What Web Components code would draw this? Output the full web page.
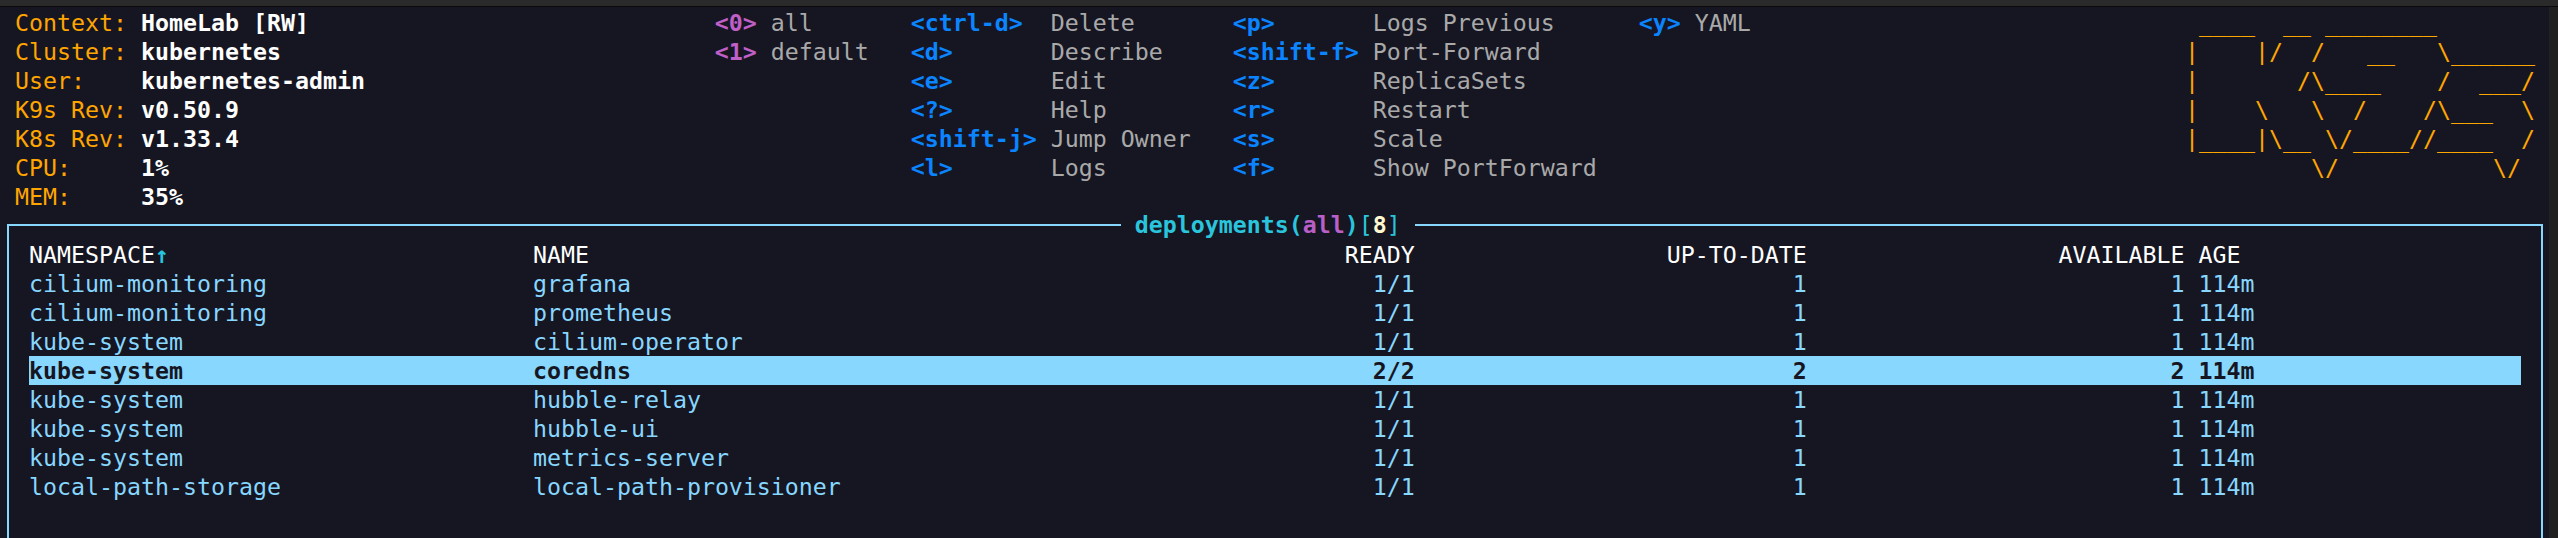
<!DOCTYPE html>
<html>
<head>
<meta charset="utf-8">
<title>k9s</title>
<style>
  html, body { margin: 0; padding: 0; background: #161622; overflow: hidden; }
  body { width: 2558px; height: 538px; font-family: "DejaVu Sans Mono", monospace; }
</style>
</head>
<body>
<k9s-screen>
  <k9s-header slot="header"></k9s-header>
  <k9s-table slot="table"></k9s-table>
</k9s-screen>

<script>
// everything in the terminal sits on a 14x29 character grid, so widths are in ch
const esc = s => s.replace(/</g, '&lt;').replace(/>/g, '&gt;');

customElements.define('k9s-screen', class extends HTMLElement {
  constructor() {
    super();
    this.attachShadow({ mode: 'open' }).innerHTML = `
      <style>
        :host { display: block; width: 2558px; height: 538px; background: #161622; overflow: hidden; }
        .bar { height: 6px; background: #2a2a2a; border-bottom: 1px solid #0a0a0a; }
        .body { display: flex; height: 531px; }
        .term {
          width: 2549px;
          box-sizing: border-box;
          padding: 1px 0 0 1px;
          overflow: hidden;
          font: 23.25px/29px "DejaVu Sans Mono", monospace;
        }
        .gutter { flex: 1; background: #202020; }
      </style>
      <div class="bar"></div>
      <div class="body">
        <div class="term">
          <slot name="header"></slot>
          <slot name="table"></slot>
        </div>
        <div class="gutter"></div>
      </div>`;
  }
});

customElements.define('k9s-header', class extends HTMLElement {
  constructor() {
    super();
    const info = [['Context:', 'HomeLab [RW]'], ['Cluster:', 'kubernetes'], ['User:', 'kubernetes-admin'],
      ['K9s Rev:', 'v0.50.9'], ['K8s Rev:', 'v1.33.4'], ['CPU:', '1%'], ['MEM:', '35%']];
    const ns = [['<0>', 'all'], ['<1>', 'default']];
    const keys1 = [['<ctrl-d>', 'Delete'], ['<d>', 'Describe'], ['<e>', 'Edit'], ['<?>', 'Help'], ['<shift-j>', 'Jump Owner'], ['<l>', 'Logs']];
    const keys2 = [['<p>', 'Logs Previous'], ['<shift-f>', 'Port-Forward'], ['<z>', 'ReplicaSets'], ['<r>', 'Restart'], ['<s>', 'Scale'], ['<f>', 'Show PortForward']];
    const keys3 = [['<y>', 'YAML']];
    const pairs = (list, a, b) => list.map(p => `<span class="${a}">${esc(p[0])}</span><span class="${b}">${esc(p[1])}</span>`).join('');
    const logo = [
      ' ____  __ ________',
      '|    |/  /   __   \\______',
      '|       /\\____    /  ___/',
      '|    \\   \\  /    /\\___  \\',
      '|____|\\__ \\/____//____  /',
      '         \\/           \\/'
    ].join('\n');
    this.attachShadow({ mode: 'open' }).innerHTML = `
      <style>
        :host { display: flex; height: 216px; padding: 0 1ch; }
        .grid { display: grid; grid-auto-rows: 29px; align-content: start; white-space: pre; }
        .info { grid-template-columns: 9ch 1fr; width: 50ch; }
        .ns { grid-template-columns: 4ch 1fr; width: 14ch; }
        .k1 { grid-template-columns: 10ch 1fr; width: 23ch; }
        .k2 { grid-template-columns: 10ch 1fr; width: 29ch; }
        .k3 { grid-template-columns: 4ch 1fr; width: 10ch; }
        .lbl { color: #ffa500; }
        .val { color: #fff; font-weight: bold; }
        .num { color: #c05fc8; font-weight: bold; }
        .key { color: #0a84ff; font-weight: bold; }
        .txt { color: #a9a9a9; }
        .logo { margin: 0 0 0 auto; width: 25ch; font: inherit; color: #ffa500; }
      </style>
      <div class="grid info">${pairs(info, 'lbl', 'val')}</div>
      <div class="grid ns">${pairs(ns, 'num', 'txt')}</div>
      <div class="grid k1">${pairs(keys1, 'key', 'txt')}</div>
      <div class="grid k2">${pairs(keys2, 'key', 'txt')}</div>
      <div class="grid k3">${pairs(keys3, 'key', 'txt')}</div>
      <pre class="logo">${esc(logo)}</pre>`;
  }
});

customElements.define('k9s-table', class extends HTMLElement {
  constructor() {
    super();
    const rows = [
      ['cilium-monitoring', 'grafana', '1/1', '1', '1', '114m'],
      ['cilium-monitoring', 'prometheus', '1/1', '1', '1', '114m'],
      ['kube-system', 'cilium-operator', '1/1', '1', '1', '114m'],
      ['kube-system', 'coredns', '2/2', '2', '2', '114m'],
      ['kube-system', 'hubble-relay', '1/1', '1', '1', '114m'],
      ['kube-system', 'hubble-ui', '1/1', '1', '1', '114m'],
      ['kube-system', 'metrics-server', '1/1', '1', '1', '114m'],
      ['local-path-storage', 'local-path-provisioner', '1/1', '1', '1', '114m']
    ];
    const row = (cells, cls) => `<div class="row ${cls}">${cells.map((c, i) => `<span class="c${i}">${c}</span>`).join('')}</div>`;
    this.attachShadow({ mode: 'open' }).innerHTML = `
      <style>
        :host {
          display: block;
          margin-left: 6px;
          width: 2536px;
          height: 320px;
          box-sizing: border-box;
          border: solid #87d7ff;
          border-width: 2px 2px 0;
          padding: 14px 20px 0;
          position: relative;
        }
        /* title sits over the top border */
        .title {
          position: absolute;
          top: -16px;
          left: calc(80ch - 8px);
          background: #161622;
          padding: 0 1ch;
          color: #2ac5dd;
          font-weight: bold;
          white-space: pre;
        }
        .title b { color: #b85fc8; }
        .title i { font-style: normal; color: #fff7d0; }
        .title s { text-decoration: none; font-weight: normal; }
        .row {
          display: grid;
          height: 29px;
          grid-template-columns: 36ch 58ch 5ch 28ch 27ch 1fr;
          color: #87d7ff;
          white-space: pre;
        }
        .c2, .c3, .c4 { text-align: right; }
        .c5 { padding-left: 1ch; }
        .head { color: #fff; }
        .sel { background: #87d7ff; color: #161622; font-weight: bold; }
        .arrow { color: #2ac5dd; font-weight: bold; }
      </style>
      <div class="title">deployments(<b>all</b>)<s>[</s><i>8</i><s>]</s></div>
      ${row(['NAMESPACE<span class="arrow">↑</span>', 'NAME', 'READY', 'UP-TO-DATE', 'AVAILABLE', 'AGE'], 'head')}
      ${rows.map((r, i) => row(r, i === 3 ? 'sel' : '')).join('')}`;
  }
});
</script>
</body>
</html>
